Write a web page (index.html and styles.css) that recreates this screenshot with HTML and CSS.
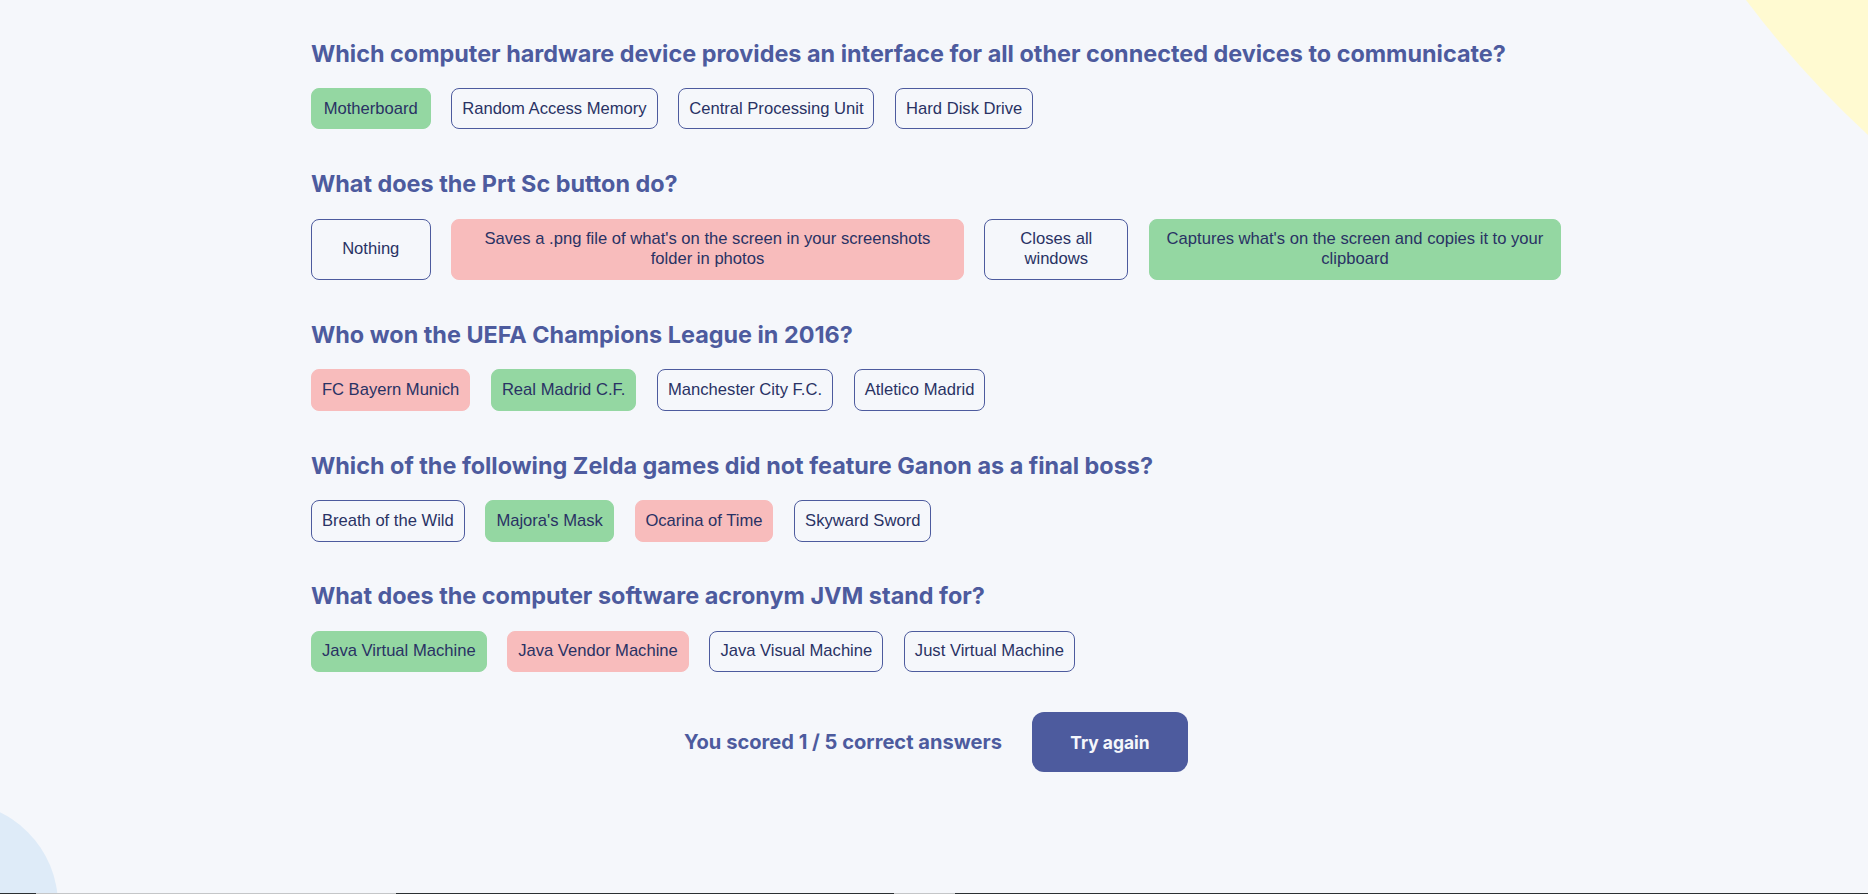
FILE: index.html
```html
<!DOCTYPE html>
<html lang="en">
<head>
<meta charset="utf-8">
<title>Quizzical</title>
<link rel="stylesheet" href="styles.css">
</head>
<body>
<div class="backdrop">
  <svg class="blob-yellow" width="130" height="140" viewBox="0 0 130 140" aria-hidden="true">
    <path d="M8 0 Q62 72 130 135 L130 0 Z" fill="#FFFAD1"/>
  </svg>
  <div class="blob-blue"></div>
</div>
<main class="quiz">
  <section class="question">
    <h2 class="question-title">Which computer hardware device provides an interface for all other connected devices to communicate?</h2>
    <div class="answers">
      <button class="answer correct">Motherboard</button>
      <button class="answer">Random Access Memory</button>
      <button class="answer">Central Processing Unit</button>
      <button class="answer">Hard Disk Drive</button>
    </div>
  </section>
  <section class="question">
    <h2 class="question-title">What does the Prt Sc button do?</h2>
    <div class="answers">
      <button class="answer">Nothing</button>
      <button class="answer wrong">Saves a .png file of what's on the screen in your screenshots folder in photos</button>
      <button class="answer">Closes all windows</button>
      <button class="answer correct">Captures what's on the screen and copies it to your clipboard</button>
    </div>
  </section>
  <section class="question">
    <h2 class="question-title">Who won the UEFA Champions League in 2016?</h2>
    <div class="answers">
      <button class="answer wrong">FC Bayern Munich</button>
      <button class="answer correct">Real Madrid C.F.</button>
      <button class="answer">Manchester City F.C.</button>
      <button class="answer">Atletico Madrid</button>
    </div>
  </section>
  <section class="question">
    <h2 class="question-title">Which of the following Zelda games did not feature Ganon as a final boss?</h2>
    <div class="answers">
      <button class="answer">Breath of the Wild</button>
      <button class="answer correct">Majora's Mask</button>
      <button class="answer wrong">Ocarina of Time</button>
      <button class="answer">Skyward Sword</button>
    </div>
  </section>
  <section class="question">
    <h2 class="question-title">What does the computer software acronym JVM stand for?</h2>
    <div class="answers">
      <button class="answer correct">Java Virtual Machine</button>
      <button class="answer wrong">Java Vendor Machine</button>
      <button class="answer">Java Visual Machine</button>
      <button class="answer">Just Virtual Machine</button>
    </div>
  </section>
  <div class="result">
    <p class="score">You scored 1 / 5 correct answers</p>
    <button class="retry">Try again</button>
  </div>
</main>
<div class="edge">
  <span class="seg dark s1"></span>
  <span class="seg grey s2"></span>
  <span class="seg dark s3"></span>
  <span class="seg grey s4"></span>
  <span class="seg dark s5"></span>
</div>
</body>
</html>
```

FILE: styles.css
```css
* { box-sizing: border-box; }

html, body {
  margin: 0;
  height: 894px;
}

body {
  background: #F5F7FB;
  overflow: hidden;
  position: relative;
  padding-left: 4px;
  font-family: Inter, "Noto Sans", sans-serif;
}

.backdrop {
  position: absolute;
  inset: 0;
  overflow: hidden;
  z-index: 0;
}

.blob-yellow {
  position: absolute;
  top: 0;
  right: 0;
  display: block;
}

.blob-blue {
  position: absolute;
  width: 206px;
  height: 206px;
  border-radius: 50%;
  background: #DEEBF8;
  left: -148px;
  top: 802px;
}

.quiz {
  position: relative;
  z-index: 1;
  width: 1250px;
  margin: 0 auto;
  padding-top: 39.5px;
}

.question {
  margin-bottom: 40.7px;
}

.question-title {
  margin: 0 0 20.4px;
  font-family: Inter, "Noto Sans", sans-serif;
  font-weight: 700;
  font-size: 23.4px;
  line-height: 28px;
  color: #4D5B9E;
}

.answers {
  display: flex;
  gap: 20.8px;
}

.answer {
  flex: 0 1 auto;
  min-width: 119.5px;
  font-family: "Liberation Sans", Arial, sans-serif;
  font-size: 16.6px;
  line-height: 20px;
  color: #293264;
  background: transparent;
  border: 1px solid #4D5B9E;
  border-radius: 8px;
  padding: 9.8px 9.9px;
  text-align: center;
}

.answer.correct {
  background: #94D7A2;
  border-color: #94D7A2;
}

.answer.wrong {
  background: #F8BCBC;
  border-color: #F8BCBC;
}

.result {
  display: flex;
  justify-content: center;
  align-items: center;
  gap: 30px;
  margin-top: -0.5px;
}

.score {
  margin: 0;
  font-weight: 700;
  font-size: 20.1px;
  color: #4D5B9E;
}

.retry {
  font-family: Inter, "Noto Sans", sans-serif;
  font-weight: 700;
  font-size: 17.4px;
  line-height: 21px;
  color: #F5F7FB;
  background: #4D5B9E;
  border: none;
  border-radius: 12px;
  width: 156px;
  height: 59.4px;
  padding: 0;
}

.edge {
  position: absolute;
  left: 0;
  right: 0;
  bottom: 0;
  height: 1px;
  display: flex;
  z-index: 2;
}

.seg { height: 1px; }
.seg.dark { background: #2b3033; }
.seg.grey { background: #c4c6c8; }
.s1 { width: 36px; }
.s2 { width: 360px; }
.s3 { width: 498px; }
.s4 { width: 61px; }
.s5 { flex: 1; }
```
